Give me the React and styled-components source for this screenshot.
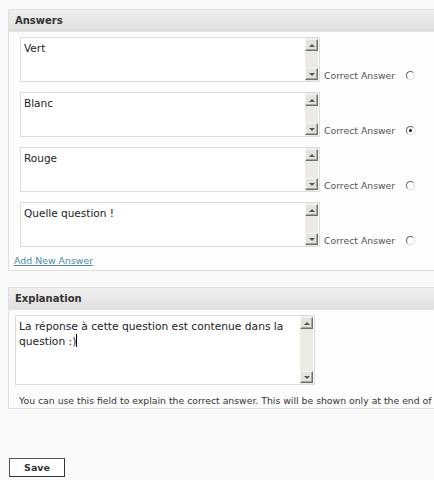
import React from "react";
import styled, { createGlobalStyle } from "styled-components";

const Global = createGlobalStyle`
  html, body { margin: 0; padding: 0; }
  body {
    background: #f9f9f9;
    overflow: hidden;
    font-family: "DejaVu Sans", Verdana, sans-serif;
    color: #333;
  }
`;

const Page = styled.div`
  padding: 9px 0 0 8px;
  width: 700px;
`;

const Panel = styled.section`
  width: 640px;
  border: 1px solid #dfdfdf;
  background: #fdfdfd;
  margin-bottom: ${(p) => p.$gap || 0}px;
`;

const PanelHeader = styled.h3`
  margin: 0;
  height: 21px;
  line-height: 21px;
  padding-left: 6px;
  font-size: 10px;
  font-weight: bold;
  color: #333;
  background: linear-gradient(#f0f0f0, #dfdfdf);
  border-bottom: 1px solid #e4e4e4;
`;

const PanelBody = styled.div`
  padding: ${(p) => p.$pad};
`;

const AnswerRow = styled.div`
  display: flex;
  align-items: flex-end;
  margin-left: 6px;
  margin-bottom: 10px;
`;

const Box = styled.div`
  display: flex;
  width: ${(p) => p.$w}px;
  height: ${(p) => p.$h}px;
  box-sizing: border-box;
  border: 1px solid #dcdcdc;
  background: #fff;
`;

const BoxText = styled.div`
  flex: 1;
  padding: 3px 3px 0 3px;
  font-size: ${(p) => p.$size || 10.5}px;
  line-height: 15px;
  color: #222;
`;

const Caret = styled.span`
  display: inline-block;
  width: 1px;
  height: 13px;
  background: #000;
  vertical-align: -2px;
`;

const ScrollBar = styled.div`
  width: 13px;
  display: flex;
  flex-direction: column;
  background: #eceae5;
  margin: 0 1px 0 0;
`;

const Track = styled.div`
  flex: 1;
`;

const ArrowBtn = styled.div`
  width: 13px;
  height: 12px;
  box-sizing: border-box;
  background: #e3e2dc;
  border-top: 1px solid #f5f5f3;
  border-left: 1px solid #f5f5f3;
  border-right: 1px solid #6e6e6e;
  border-bottom: 1px solid #6e6e6e;
  box-shadow: inset -1px -1px 0 #a8a7a2;
  display: flex;
  align-items: center;
  justify-content: center;
  margin-top: ${(p) => (p.$down ? 0 : 1)}px;
  margin-bottom: ${(p) => (p.$down ? 1 : 0)}px;
`;

const Tri = styled.span`
  width: 0;
  height: 0;
  border-left: 3px solid transparent;
  border-right: 3px solid transparent;
  ${(p) =>
    p.$down
      ? "border-top: 3px solid #555;"
      : "border-bottom: 3px solid #555;"}
`;

const CorrectLabel = styled.label`
  display: flex;
  align-items: center;
  margin-left: 4px;
  margin-bottom: 1px;
  font-size: 9.3px;
  color: #555;
  height: 12px;
`;

const Radio = styled.span`
  position: relative;
  display: inline-block;
  width: 9px;
  height: 9px;
  margin-left: 11px;
  border-radius: 50%;
  box-sizing: border-box;
  background: #fff;
  border: 1px solid;
  border-color: #666 #ddd #ddd #666;
  &::after {
    content: "";
    display: ${(p) => (p.$checked ? "block" : "none")};
    position: absolute;
    left: 2px;
    top: 2px;
    width: 3px;
    height: 3px;
    border-radius: 50%;
    background: #111;
  }
`;

const AddLink = styled.a`
  display: block;
  margin: -2px 0 0 0;
  padding-bottom: 3px;
  font-size: 9.4px;
  color: #4f8aa3;
  text-decoration: underline;
  line-height: 12px;
`;

const HelpText = styled.p`
  margin: 10px 0 0 4px;
  padding-bottom: 1px;
  font-size: 9.3px;
  line-height: 12px;
  color: #333;
  white-space: nowrap;
`;

const SaveButton = styled.button`
  margin-left: 1px;
  width: 56px;
  height: 19px;
  padding: 0;
  background: #fff;
  border: 1px solid #555;
  border-right-color: #333;
  border-bottom-color: #333;
  font-family: "DejaVu Sans", Verdana, sans-serif;
  font-size: 9.5px;
  font-weight: bold;
  color: #333;
`;

function TextBox({ w, h, size, children }) {
  return (
    <Box $w={w} $h={h}>
      <BoxText $size={size}>{children}</BoxText>
      <ScrollBar>
        <ArrowBtn>
          <Tri />
        </ArrowBtn>
        <Track />
        <ArrowBtn $down>
          <Tri $down />
        </ArrowBtn>
      </ScrollBar>
    </Box>
  );
}

const answers = [
  { text: "Vert", checked: false },
  { text: "Blanc", checked: true },
  { text: "Rouge", checked: false },
  { text: "Quelle question !", checked: false },
];

export default function App() {
  return (
    <>
      <Global />
      <Page>
        <Panel $gap={16}>
          <PanelHeader>Answers</PanelHeader>
          <PanelBody $pad="5px 0 0 5px">
            {answers.map((a) => (
              <AnswerRow key={a.text}>
                <TextBox w={300} h={45}>
                  {a.text}
                </TextBox>
                <CorrectLabel>
                  Correct Answer <Radio $checked={a.checked} />
                </CorrectLabel>
              </AnswerRow>
            ))}
            <AddLink href="#">Add New Answer</AddLink>
          </PanelBody>
        </Panel>
        <Panel $gap={47}>
          <PanelHeader>Explanation</PanelHeader>
          <PanelBody $pad="5px 0 0 6px">
            <TextBox w={300} h={70} size={10.7}>
              La réponse à cette question est contenue dans la question :)
              <Caret />
            </TextBox>
            <HelpText>
              You can use this field to explain the correct answer. This will be
              shown only at the end of the quiz.
            </HelpText>
          </PanelBody>
        </Panel>
        <SaveButton>Save</SaveButton>
      </Page>
    </>
  );
}
